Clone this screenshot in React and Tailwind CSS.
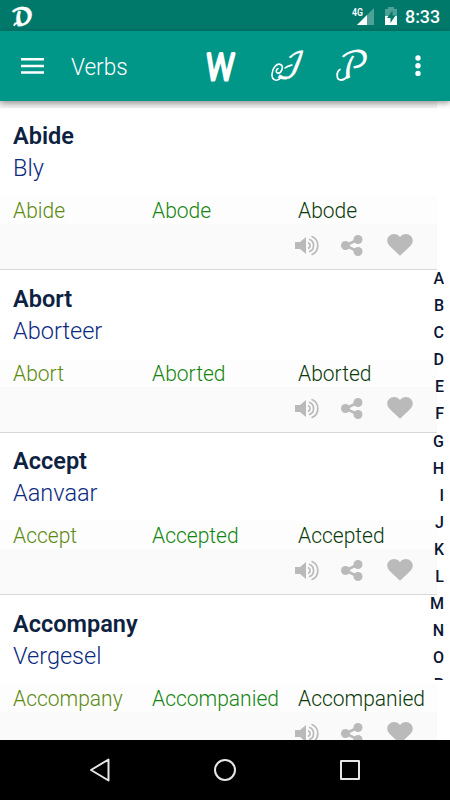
const verbs = [
  { word: "Abide", translation: "Bly", forms: ["Abide", "Abode", "Abode"] },
  { word: "Abort", translation: "Aborteer", forms: ["Abort", "Aborted", "Aborted"] },
  { word: "Accept", translation: "Aanvaar", forms: ["Accept", "Accepted", "Accepted"] },
  { word: "Accompany", translation: "Vergesel", forms: ["Accompany", "Accompanied", "Accompanied"] },
];

const letters = ["A", "B", "C", "D", "E", "F", "G", "H", "I", "J", "K", "L", "M", "N", "O", "P"];

const script = "'DejaVu Math TeX Gyre', 'DejaVu Serif', serif";

function StatusBar() {
  return (
    <div className="flex h-[31px] shrink-0 items-center bg-[#00796b] pl-[12px] pr-[10px] text-white">
      <svg className="overflow-visible" width="22" height="22" viewBox="0 0 22 22">
        <text transform="translate(1.500 19.500) scale(0.940 1) skewX(14)" fontSize="23" fill="white" stroke="white" strokeWidth="0.300" fontFamily={script}>𝓓</text>
        <path d="M9.500 19C7 17.500 3 17.500 2.300 20" fill="none" stroke="white" strokeWidth="2" strokeLinecap="round" />
      </svg>
      <svg className="ml-auto" width="24" height="22" viewBox="0 0 24 22">
        <path d="M23 3v17H6z" fill="#4da197" />
        <path d="M16 10v10H6z" fill="white" />
        <rect x="0" y="2" width="11" height="9" fill="#00796b" />
        <text x="1" y="10.500" fontSize="11" fontWeight="600" fill="white" textLength="11" lengthAdjust="spacingAndGlyphs" fontFamily="Roboto, sans-serif">4G</text>
      </svg>
      <svg className="ml-[9px]" width="14" height="20" viewBox="0 0 14 20">
        <path d="M4 1h6v2h3v8H1V3h3z" fill="#4da197" />
        <path d="M1 10h12v9H1z" fill="white" />
        <path d="M8.500 4.500 3 12h3.500v5L11.500 9.500H8.500z" fill="#00796b" />
      </svg>
      <span className="ml-[7px] -mr-[2px] origin-left scale-x-[0.94] pt-[1px] text-[19px] font-medium leading-none">8:33</span>
    </div>
  );
}

function Toolbar() {
  return (
    <header className="z-10 flex h-[70px] shrink-0 items-center bg-[#009688] pl-[21px] text-white shadow-[0_2px_6px_rgba(0,0,0,0.4)]">
      <svg width="23" height="16" viewBox="0 0 23 16" fill="white">
        <path d="M0 0h23v2.500H0zM0 6.700h23v2.500H0zM0 13.300h23v2.500H0z" />
      </svg>
      <h1 className="ml-[27px] w-[125px] origin-left scale-x-[0.94] pt-[2px] text-[24px] font-light">Verbs</h1>
      <svg className="ml-[9px] overflow-visible" width="32" height="34" viewBox="0 0 32 34">
        <text transform="translate(0.500 30.500) skewX(-3)" fontSize="37" fontWeight="300" fill="white" stroke="white" strokeWidth="3.200" strokeLinejoin="round" textLength="28" lengthAdjust="spacingAndGlyphs" fontFamily="Roboto, sans-serif">W</text>
      </svg>
      <svg className="ml-[33px] overflow-visible" width="34" height="34" viewBox="0 0 34 34">
        <text transform="translate(5 29) skewX(-10)" fontSize="36" fill="white" stroke="white" strokeWidth="0.300" fontFamily={script}>ℐ</text>
        <path d="M11 28.500C7 33.500 1.500 31 2 25C2.500 18.500 7 14 10.500 15.500C14.500 17.500 11 25 7.500 24C5.500 23.300 6 20.500 8 19.500M15 19C17.500 17 20 16.500 22 16" fill="none" stroke="white" strokeWidth="1.600" strokeLinecap="round" />
      </svg>
      <svg className="ml-[31px] overflow-visible" width="34" height="34" viewBox="0 0 34 34">
        <text transform="translate(4 29) scale(0.980 1)" fontSize="37" fill="white" fontFamily={script}>𝒫</text>
        <path d="M12 27.500C9 32 2.500 32.500 2.200 27C2 24 3.200 21.500 5 20.500" fill="none" stroke="white" strokeWidth="1.800" strokeLinecap="round" />
      </svg>
      <svg className="ml-auto mr-[29px]" width="6" height="22" viewBox="0 0 6 22" fill="white">
        <circle cx="3" cy="3" r="2.700" />
        <circle cx="3" cy="10.700" r="2.700" />
        <circle cx="3" cy="18.400" r="2.700" />
      </svg>
    </header>
  );
}

function Actions() {
  return (
    <div className="flex h-[45px] bg-[#fafafa] pl-[294px] pt-[8px]">
      <svg width="26" height="26" viewBox="0 0 26 26" fill="none" stroke="#bababa" strokeWidth="1.700">
        <path d="M1 10h5l6-5v17l-6-5H1z" fill="#bababa" stroke="none" />
        <path d="M14 10.500a3.200 3.200 0 0 1 0 6M15 7.300a6.500 6.500 0 0 1 0 12.400M17.500 4.200a10 10 0 0 1 0 18.600" />
      </svg>
      <svg className="ml-[20px]" width="24" height="26" viewBox="0 0 24 26" fill="#bababa">
        <path d="M18 7.500 5.500 13.500 18 19.500" fill="none" stroke="#bababa" strokeWidth="2.600" />
        <circle cx="18" cy="7.500" r="4.500" />
        <circle cx="5.500" cy="13.500" r="4.500" />
        <circle cx="18" cy="19.500" r="4.500" />
      </svg>
      <svg className="ml-[22px]" width="28" height="26" viewBox="0 0 28 26">
        <path d="M14 23.700 3.700 14C-1.500 8.700 2.300 2 8 2c2.400 0 4.600 1.100 6 3 1.400-1.900 3.600-3 6-3 5.700 0 9.500 6.700 4.300 12z" fill="#bababa" />
      </svg>
    </div>
  );
}

function VerbRow({ verb }) {
  return (
    <li className="h-[162.6px] shrink-0 border-b border-[#d8d8d8] bg-white">
      <div className="h-[88.600px] pl-[12.500px] pt-[12.500px]">
        <h2 className="origin-left scale-x-[0.98] text-[24px] font-semibold leading-[32px] text-[#0d2240]">{verb.word}</h2>
        <p className="origin-left scale-x-[0.98] text-[24px] font-light leading-[32px] text-[#0b2a80]">{verb.translation}</p>
      </div>
      <div className="flex h-[28px] bg-[#fdfdfd] pl-[12.500px] text-[22px] font-light leading-[29px]">
        <span className="w-[139.500px] origin-left scale-x-[0.955] text-[#5c8a10]">{verb.forms[0]}</span>
        <span className="w-[146px] origin-left scale-x-[0.955] text-[#148510]">{verb.forms[1]}</span>
        <span className="origin-left scale-x-[0.955] text-[#0a3a0a]">{verb.forms[2]}</span>
      </div>
      <Actions />
    </li>
  );
}

function NavBar() {
  return (
    <nav className="flex h-[60px] shrink-0 items-center justify-center gap-[101px] bg-black">
      <svg width="24" height="26" viewBox="0 0 24 26" fill="none" stroke="#e6e6e6" strokeWidth="2" strokeLinejoin="round">
        <path d="M20.500 2.500v21L3 13z" />
      </svg>
      <svg width="24" height="24" viewBox="0 0 24 24" fill="none" stroke="#e6e6e6" strokeWidth="2">
        <circle cx="12" cy="12" r="10" />
      </svg>
      <svg width="24" height="24" viewBox="0 0 24 24" fill="none" stroke="#e6e6e6" strokeWidth="2" strokeLinejoin="round">
        <rect x="3" y="3" width="18" height="18" />
      </svg>
    </nav>
  );
}

export default function App() {
  return (
    <div className="flex h-[800px] w-[450px] flex-col overflow-hidden bg-white font-[Roboto,sans-serif]">
      <StatusBar />
      <Toolbar />
      <main className="flex min-h-0 flex-1 overflow-hidden">
        <ul className="flex w-[437px] shrink-0 flex-col bg-[#f1f1f1] pt-[6.500px]">
          {verbs.map((verb) => (
            <VerbRow key={verb.word} verb={verb} />
          ))}
        </ul>
        <div className="-ml-[14px] mt-[164px] flex h-[415px] w-[21px] shrink-0 flex-col overflow-hidden text-right text-[16px] font-medium text-[#0a1533]">
          {letters.map((letter) => (
            <span key={letter} className="h-[27.100px] shrink-0 leading-[27px]">{letter}</span>
          ))}
        </div>
      </main>
      <NavBar />
    </div>
  );
}
